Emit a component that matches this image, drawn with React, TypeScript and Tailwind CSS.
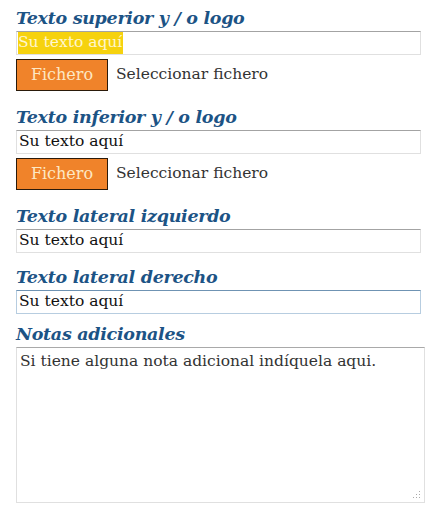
const serif = { fontFamily: '"DejaVu Serif", Georgia, serif' };

function Heading({ children }: { children: React.ReactNode }) {
  return (
    <h2 className="h-[24px] text-[17.5px] leading-[22px] font-bold italic text-[#1c5385] tracking-[-0.3px]">
      {children}
    </h2>
  );
}

function TextBox({ focused, selected }: { focused?: boolean; selected?: boolean }) {
  return (
    <div
      className={
        "h-[24px] w-[405px] border flex items-stretch pl-[1px] text-[15.5px] " +
        (focused
          ? "border-[#b7cde0] border-t-[#6f93b3]"
          : "border-[#e0e0e0] border-t-[#a3a3a3]")
      }
    >
      {selected ? (
        <span className="bg-[#f6d20e] text-[#fff6cf] flex items-center pr-[1px]">Su texto aquí</span>
      ) : (
        <span className="text-[#111] flex items-center pl-[1px]">Su texto aquí</span>
      )}
    </div>
  );
}

function FileRow() {
  return (
    <div className="flex items-center mt-[4px] h-[32px]">
      <button className="w-[92px] h-[32px] bg-[#f0832a] border border-[#2a1a0a] text-[#fde8c4] text-[16px]">
        Fichero
      </button>
      <span className="ml-[8px] text-[15.5px] text-[#333]">Seleccionar fichero</span>
    </div>
  );
}

export default function App() {
  return (
    <div className="w-[446px] h-[528px] bg-white px-4 pt-[7px]" style={serif}>
      <Heading>Texto superior y / o logo</Heading>
      <TextBox selected />
      <FileRow />

      <div className="mt-[15px]">
        <Heading>Texto inferior y / o logo</Heading>
      </div>
      <TextBox />
      <FileRow />

      <div className="mt-[15px]">
        <Heading>Texto lateral izquierdo</Heading>
      </div>
      <TextBox />

      <div className="mt-[13px]">
        <Heading>Texto lateral derecho</Heading>
      </div>
      <TextBox focused />

      <div className="mt-[9px]">
        <Heading>Notas adicionales</Heading>
      </div>
      <div className="relative w-[409px] h-[156px] border border-[#e0e0e0] border-t-[#a9a9a9] pl-[3px] pt-[2px] text-[15.5px] text-[#333]">
        Si tiene alguna nota adicional indíquela aqui.
        <svg className="absolute right-[3px] bottom-[3px]" width="9" height="9" viewBox="0 0 9 9">
          <rect x="7" y="1" width="1" height="1" fill="#aaa" />
          <rect x="7" y="4" width="1" height="1" fill="#aaa" />
          <rect x="4" y="4" width="1" height="1" fill="#aaa" />
          <rect x="7" y="7" width="1" height="1" fill="#aaa" />
          <rect x="4" y="7" width="1" height="1" fill="#aaa" />
          <rect x="1" y="7" width="1" height="1" fill="#aaa" />
        </svg>
      </div>
    </div>
  );
}
